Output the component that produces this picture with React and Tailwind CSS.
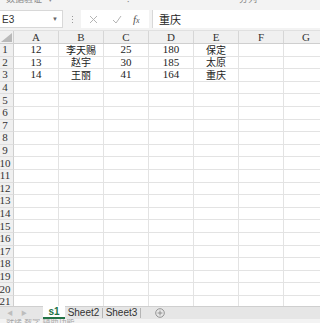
import React from "react";

const cols = ["A", "B", "C", "D", "E", "F", "G"];

const rows = [
  ["12", "李天赐", "25", "180", "保定"],
  ["13", "赵宇", "30", "185", "太原"],
  ["14", "王丽", "41", "164", "重庆"],
];

const serif = { fontFamily: '"Liberation Serif", "Noto Sans CJK SC", serif' };
const sans = { fontFamily: '"Liberation Sans", "Noto Sans CJK SC", sans-serif' };

const rowNums = Array.from({ length: 21 }, (_, i) => i + 1);

const App = () => {
  return (
    <div className="w-[320px] h-[323px] overflow-hidden bg-white flex flex-col" style={sans}>
      {/* ribbon leftovers */}
      <div className="h-[8px] bg-[#f3f3f3] overflow-hidden shrink-0">
        <div className="flex items-end h-[4px] overflow-hidden text-[9px] text-[#8a8a8a] leading-none">
          <span className="ml-[6px] -mt-[5px]">数据验证</span>
          <span className="ml-[6px] -mt-[5px]">▾</span>
          <span className="ml-[74px] -mt-[5px]">⁝</span>
          <span className="ml-[110px] -mt-[5px]">分列</span>
        </div>
      </div>

      {/* formula bar */}
      <div className="h-[22px] bg-[#f3f3f3] flex items-start shrink-0 pt-[2px]">
        <div className="w-[63px] h-[18px] bg-white border border-[#d8d8d8] border-l-0 flex items-center justify-between pl-[2px] pr-[4px]">
          <span className="text-[10px] text-[#333]">E3</span>
          <span className="text-[6px] text-[#666]">▼</span>
        </div>
        <div className="w-[18px] h-[18px] flex flex-col items-center justify-center gap-[2px]">
          <span className="w-[1px] h-[1px] bg-[#999]" />
          <span className="w-[1px] h-[1px] bg-[#999]" />
          <span className="w-[1px] h-[1px] bg-[#999]" />
        </div>
        <div className="w-[68px] h-[18px] bg-white flex items-center">
          <svg width="9" height="9" viewBox="0 0 9 9" className="ml-[8px]">
            <path d="M1 1 L8 8 M8 1 L1 8" stroke="#b4b4b4" strokeWidth="1" />
          </svg>
          <svg width="10" height="9" viewBox="0 0 10 9" className="ml-[14px]">
            <path d="M1 5 L4 8 L9 1" stroke="#b4b4b4" strokeWidth="1" fill="none" />
          </svg>
          <span className="ml-[11px] text-[11px] italic text-[#555]" style={serif}>
            f<span className="text-[8px]">x</span>
          </span>
        </div>
        <div className="ml-[3px] flex-1 h-[18px] bg-white border-l border-[#d8d8d8] flex items-center pl-[6px]">
          <span className="text-[11px] text-[#222]" style={{ fontFamily: '"Noto Sans CJK SC", sans-serif' }}>
            重庆
          </span>
        </div>
      </div>

      {/* grid */}
      <div className="flex-1 overflow-hidden" style={serif}>
        <div className="grid grid-cols-[14px_repeat(7,45px)] h-[14px] bg-[#f0f0f0] border-b border-[#cfcfcf] border-t border-t-[#e0e0e0]">
          <div className="relative border-r border-[#cfcfcf]">
            <svg width="11" height="9" viewBox="0 0 11 9" className="absolute right-[1px] bottom-[1px]">
              <path d="M11 0 L11 9 L0 9 Z" fill="#b9b9b9" />
            </svg>
          </div>
          {cols.map((c) => (
            <div
              key={c}
              className="border-r border-[#d6d6d6] flex items-center justify-center text-[11px] text-[#333] leading-none"
            >
              {c}
            </div>
          ))}
        </div>
        {rowNums.map((n) => {
          const data = rows[n - 1] || [];
          return (
            <div key={n} className="grid grid-cols-[14px_repeat(7,45px)] h-[12.6px]">
              <div className="bg-[#f0f0f0] border-r border-[#cfcfcf] border-b border-b-[#dedede] flex items-center justify-center pr-[3px] text-[11px] text-[#333] leading-none">
                {n}
              </div>
              {cols.map((c, i) => (
                <div
                  key={c}
                  className="border-r border-b border-[#e3e3e3] flex items-center justify-center text-[11px] text-[#222] leading-none whitespace-nowrap overflow-hidden"
                  style={i === 1 || i === 4 ? { fontFamily: '"Noto Sans CJK SC", serif', fontSize: "10px", lineHeight: "10px" } : undefined}
                >
                  {data[i] || ""}
                </div>
              ))}
            </div>
          );
        })}
      </div>

      {/* sheet tabs */}
      <div className="h-[13px] bg-[#e6e6e6] border-t border-[#cfcfcf] flex items-stretch shrink-0 text-[10px] leading-none">
        <div className="w-[43px] flex items-center">
          <span className="ml-[7px] text-[6px] text-[#bdbdbd]">◀</span>
          <span className="ml-[8px] text-[6px] text-[#bdbdbd]">▶</span>
        </div>
        <div className="w-[22px] bg-white flex items-center justify-center text-[#217346] font-bold border-b-2 border-[#217346] -mt-[1px]">
          s1
        </div>
        <div className="w-[38px] flex items-center justify-center text-[#333] border-r border-[#b5b5b5] my-[1px]">
          Sheet2
        </div>
        <div className="w-[38px] flex items-center justify-center text-[#333] border-r border-[#b5b5b5] my-[1px]">
          Sheet3
        </div>
        <div className="ml-[14px] flex items-center">
          <svg width="10" height="10" viewBox="0 0 10 10">
            <circle cx="5" cy="5" r="4.3" stroke="#8a8a8a" strokeWidth="0.9" fill="none" />
            <path d="M5 2.6 V7.4 M2.6 5 H7.4" stroke="#8a8a8a" strokeWidth="0.9" />
          </svg>
        </div>
      </div>

      {/* status bar */}
      <div className="h-[4px] bg-[#f3f3f3] shrink-0 overflow-hidden">
        <div className="text-[8px] text-[#aaa] ml-[6px] leading-none">就绪 数字 辅助功能</div>
      </div>
    </div>
  );
};

export default App;
